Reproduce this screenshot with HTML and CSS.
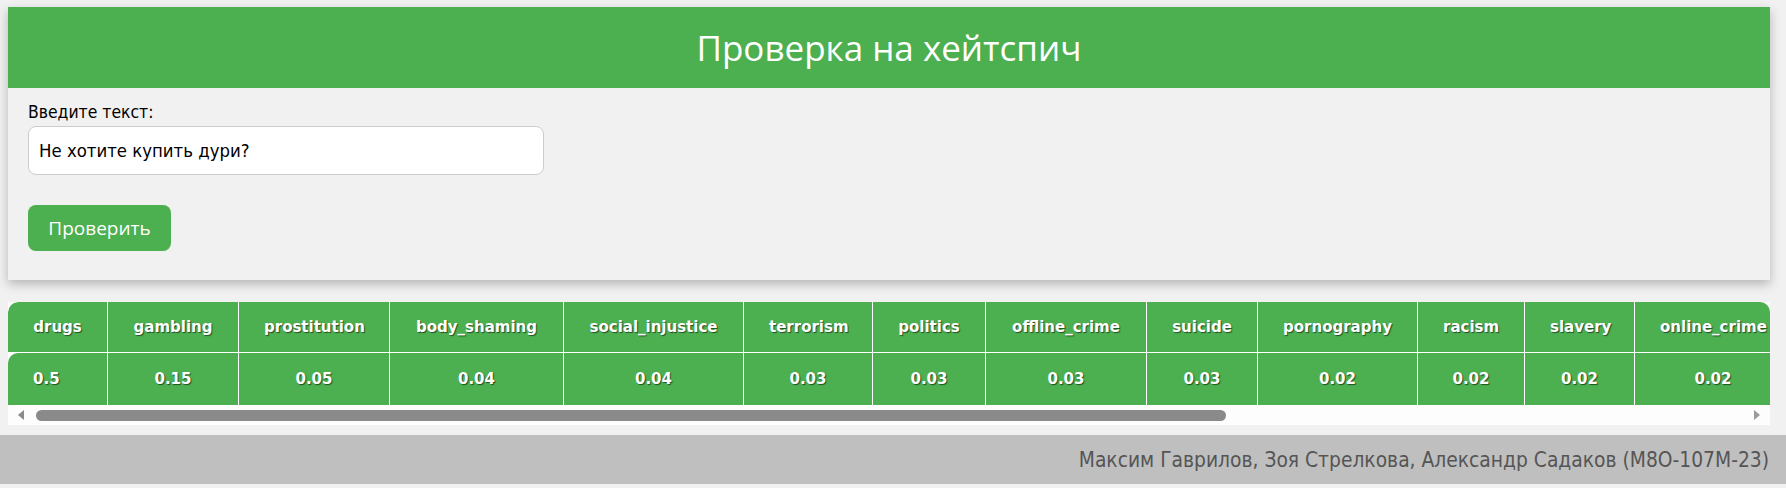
FILE: index.html
```html
<!DOCTYPE html>
<html lang="ru">
<head>
<meta charset="utf-8">
<title>Проверка на хейтспич</title>
<link rel="stylesheet" href="styles.css">
</head>
<body>
<div class="page">
  <div class="card">
    <header class="card-head"><h1 class="title">Проверка на хейтспич</h1></header>
    <div class="card-body">
      <label class="label" for="txt">Введите текст:</label>
      <input id="txt" class="text-input" type="text" value="Не хотите купить дури?">
      <button class="btn" type="button">Проверить</button>
    </div>
  </div>
  <div class="results">
    <div class="table-clip">
      <table class="scores">
        <colgroup>
          <col class="w100"><col class="w131"><col class="w151"><col class="w174"><col class="w180"><col class="w129"><col class="w113"><col class="w161"><col class="w111"><col class="w160"><col class="w107"><col class="w110"><col class="w157"><col class="w125"><col class="w183"><col class="w115"><col class="w208"><col class="w109">
        </colgroup>
        <thead>
          <tr><th>drugs</th><th>gambling</th><th>prostitution</th><th>body_shaming</th><th>social_injustice</th><th>terrorism</th><th>politics</th><th>offline_crime</th><th>suicide</th><th>pornography</th><th>racism</th><th>slavery</th><th>online_crime</th><th>weapons</th><th>health_shaming</th><th>religion</th><th>sexual_minorities</th><th>sexism</th></tr>
        </thead>
        <tbody>
          <tr><td>0.5</td><td>0.15</td><td>0.05</td><td>0.04</td><td>0.04</td><td>0.03</td><td>0.03</td><td>0.03</td><td>0.03</td><td>0.02</td><td>0.02</td><td>0.02</td><td>0.02</td><td>0.01</td><td>0.01</td><td>0.01</td><td>0.01</td><td>0.01</td></tr>
        </tbody>
      </table>
    </div>
    <div class="hscroll">
      <span class="arrow arrow-left"></span>
      <span class="track"><span class="thumb"></span></span>
      <span class="arrow arrow-right"></span>
    </div>
  </div>
</div>
<footer class="footer">Максим Гаврилов, Зоя Стрелкова, Александр Садаков (М8О-107М-23)</footer>
</body>
</html>
```
FILE: styles.css
```css
html, body {
  margin: 0;
  padding: 0;
  background: #f1f1f1;
}
body {
  font-family: "DejaVu Sans Condensed", "DejaVu Sans", sans-serif;
  color: #000;
}
.page {
  padding: 7px 16px 0 8px;
}
.card {
  background: #f1f1f1;
  box-shadow: 0 4px 10px rgba(0, 0, 0, 0.25);
}
.card-head {
  background: #4caf50;
  height: 81px;
  display: flex;
  align-items: center;
  justify-content: center;
}
.title {
  margin: 0;
  font-family: "Open Sans", "Noto Sans", sans-serif;
  font-weight: 400;
  font-size: 35px;
  color: #fff;
  line-height: 1;
}
.card-body {
  padding: 14px 20px 29px;
  display: flex;
  flex-direction: column;
  align-items: flex-start;
}
.label {
  font-size: 17.4px;
  line-height: 20px;
}
.text-input {
  margin-top: 4px;
  box-sizing: border-box;
  width: 516px;
  height: 49px;
  padding: 0 10px;
  border: 1px solid #ccc;
  border-radius: 8px;
  background: #fff;
  font-family: "DejaVu Sans Condensed", "DejaVu Sans", sans-serif;
  font-size: 18.4px;
  color: #000;
  outline: none;
}
.btn {
  margin-top: 30px;
  box-sizing: border-box;
  width: 143px;
  height: 46px;
  border: none;
  border-radius: 8px;
  background: #4caf50;
  color: #fff;
  font-family: "Open Sans", "Noto Sans", sans-serif;
  font-size: 19px;
  padding: 0;
}
.results {
  margin-top: 22px;
  margin-bottom: 10px;
  background: #fdfdfd;
}
.table-clip {
  overflow: hidden;
  border-radius: 10px 10px 0 0;
  background: #fff;
}
.scores {
  table-layout: fixed;
  width: 2524px;
  border-collapse: separate;
  border-spacing: 0;
  font-family: "DejaVu Sans", sans-serif;
  font-weight: bold;
  font-size: 15px;
  color: #fff;
  text-shadow: 1px 1px 1px rgba(0, 0, 0, 0.55);
}
.scores th, .scores td {
  background: #4caf50;
  text-align: center;
  white-space: nowrap;
  border-right: 1px solid #fff;
  line-height: 18px;
  padding: 16px 25px;
  overflow: hidden;
}
.scores th {
  border-bottom: 1px solid #fff;
}
.scores td {
  padding: 17px 25px;
}
.scores th:first-child, .scores td:first-child {
  border-top-left-radius: 10px;
}
.scores td:first-child {
  text-align: left;
}
.w100 { width: 100px; }
.w131 { width: 131px; }
.w151 { width: 151px; }
.w174 { width: 174px; }
.w180 { width: 180px; }
.w129 { width: 129px; }
.w113 { width: 113px; }
.w161 { width: 161px; }
.w111 { width: 111px; }
.w160 { width: 160px; }
.w107 { width: 107px; }
.w110 { width: 110px; }
.w157 { width: 157px; }
.w125 { width: 125px; }
.w183 { width: 183px; }
.w115 { width: 115px; }
.w208 { width: 208px; }
.w109 { width: 109px; }
.hscroll {
  height: 20px;
  display: flex;
  align-items: center;
  padding: 0 10px;
  background: #fdfdfd;
}
.arrow {
  width: 0;
  height: 0;
  border-top: 5px solid transparent;
  border-bottom: 5px solid transparent;
}
.arrow-left {
  border-right: 6px solid #8a8a8a;
}
.arrow-right {
  border-left: 6px solid #9a9a9a;
}
.track {
  flex: 1;
  display: flex;
  padding: 0 12px;
}
.thumb {
  width: 1190px;
  height: 11px;
  border-radius: 6px;
  background: #8a8a8a;
}
.footer {
  height: 49px;
  background: #bfbfbf;
  color: #555;
  font-size: 20.8px;
  display: flex;
  align-items: center;
  justify-content: flex-end;
  padding-right: 17px;
}
```
